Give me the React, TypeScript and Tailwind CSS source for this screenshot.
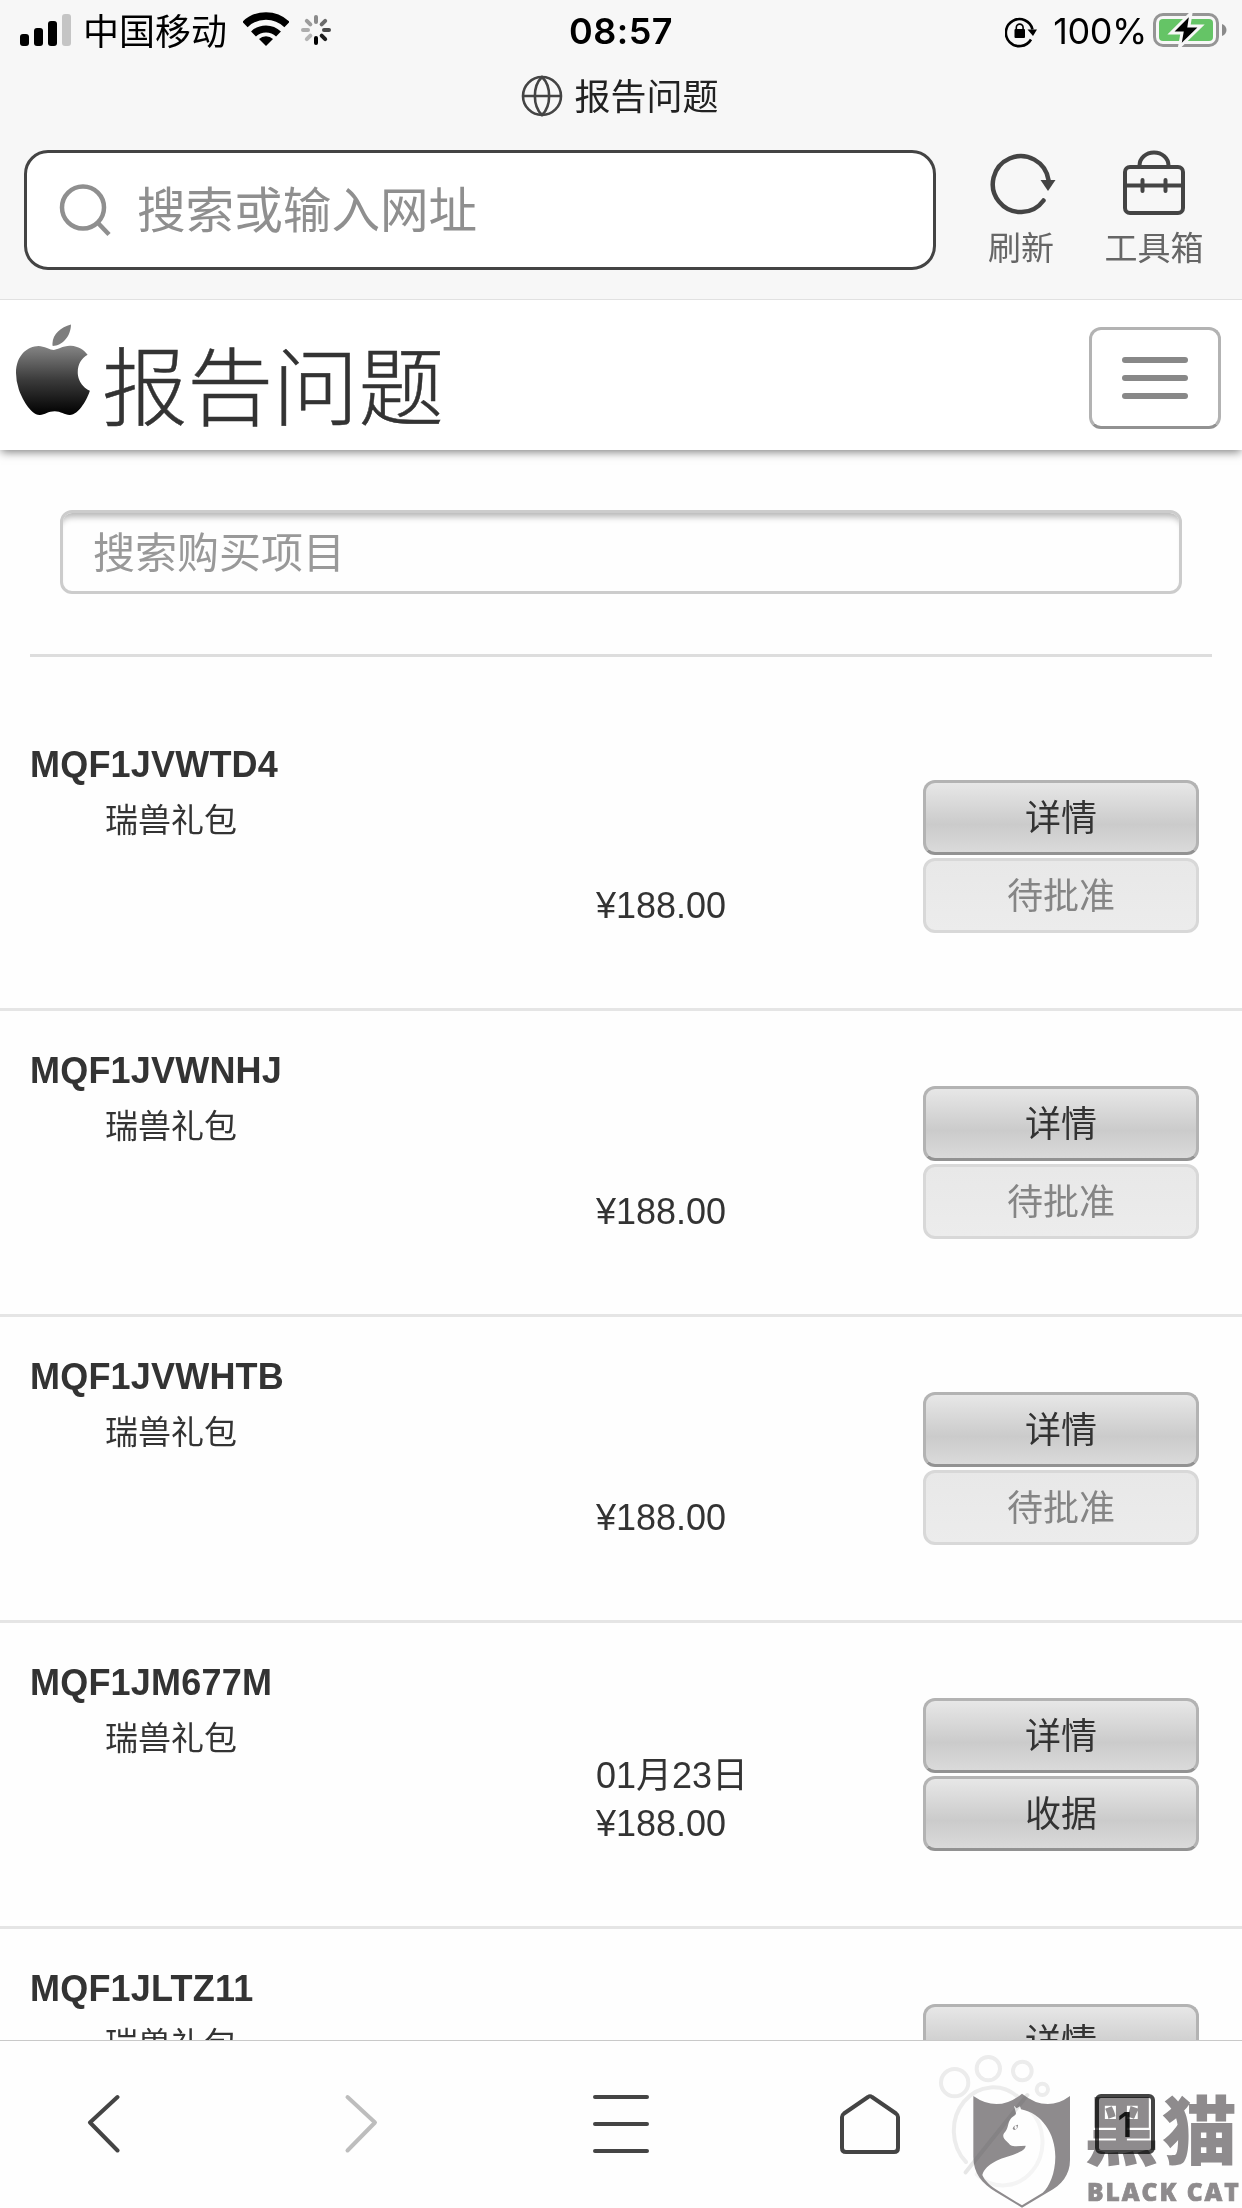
import clsx from "clsx";

type Order = {
  id: string;
  name: string;
  date?: string;
  price: string;
  pending: boolean;
};

const orders: Order[] = [
  { id: "MQF1JVWTD4", name: "瑞兽礼包", price: "¥188.00", pending: true },
  { id: "MQF1JVWNHJ", name: "瑞兽礼包", price: "¥188.00", pending: true },
  { id: "MQF1JVWHTB", name: "瑞兽礼包", price: "¥188.00", pending: true },
  {
    id: "MQF1JM677M",
    name: "瑞兽礼包",
    date: "01月23日",
    price: "¥188.00",
    pending: false,
  },
  { id: "MQF1JLTZ11", name: "瑞兽礼包", price: "¥188.00", pending: false },
];

// One entry per spoke, clockwise from the top
const spokes = [
  "#8a8a8a",
  "#6b6b6b",
  "#4a4a4a",
  "#1c1c1c",
  "#000000",
  "#b5b5b5",
  "#adadad",
  "#9c9c9c",
];

const stroke = {
  fill: "none",
  stroke: "#444",
  strokeWidth: 4,
  strokeLinecap: "round",
  strokeLinejoin: "round",
} as const;

const StatusBar = () => {
  return (
    <div className="grid h-[60px] grid-cols-3 items-start font-['Inter','Noto_Sans_CJK_SC',sans-serif] text-[36px] leading-[60px] text-black">
      <div className="flex items-start">
        <svg width="52" height="60" className="ml-5">
          <rect x="0" y="34" width="9" height="12" rx="3" />
          <rect x="14" y="28" width="9" height="18" rx="3" />
          <rect x="28" y="21" width="9" height="25" rx="3" />
          <rect x="42" y="14" width="9" height="32" rx="3" fill="#c5c5c5" />
        </svg>
        <span className="ml-[11px] font-['Noto_Sans_CJK_SC',sans-serif] leading-[58px]">
          中国移动
        </span>
        <svg width="46" height="60" className="ml-4" fill="none">
          <path
            d="M2 24.500a30 30 0 0 1 42 0"
            stroke="black"
            strokeWidth="7.500"
          />
          <path d="M10.500 34a18 18 0 0 1 25 0" stroke="black" strokeWidth="7" />
          <path d="M23 46l-7-7a10 10 0 0 1 14 0z" fill="black" />
        </svg>
        <svg width="30" height="60" viewBox="-15 -30 30 60" className="ml-3">
          {spokes.map((color, i) => (
            <line
              key={i}
              x1="0"
              y1="-13"
              x2="0"
              y2="-8"
              stroke={color}
              strokeWidth="4"
              strokeLinecap="round"
              transform={`rotate(${i * 45})`}
            />
          ))}
        </svg>
      </div>
      <div className="pt-px text-center font-semibold tracking-[0.500px]">
        08:57
      </div>
      <div className="flex items-start justify-end pr-[15px]">
        <svg width="33" height="60" fill="none" className="mr-[15px]">
          <path
            d="M26 39.500a13.500 13.500 0 1 1 1.500-10"
            stroke="black"
            strokeWidth="2.600"
          />
          <path d="M22.500 29.500h9.500l-4 6.500z" fill="black" />
          <rect x="9.500" y="29" width="10.500" height="9" rx="1" fill="black" />
          <path
            d="M11.300 30v-2.500a3.400 3.400 0 0 1 6.800 0v2.500"
            stroke="black"
            strokeWidth="1.600"
          />
        </svg>
        <span className="pt-px tracking-[-0.400px]">100%</span>
        <svg width="74" height="60" viewBox="0 0 74 60" className="ml-[6px]">
          <rect
            x="1.500"
            y="14.500"
            width="63"
            height="31"
            rx="8.500"
            fill="none"
            stroke="#959595"
            strokeWidth="3"
          />
          <rect x="6" y="19" width="54" height="22" rx="4" fill="#65c466" />
          <path d="M69 24c3 1 4.500 3.500 4.500 6s-1.500 5-4.500 6z" fill="#8a8a8a" />
          <path
            d="M38 13L18 33h11l-2.500 14L48 26H36z"
            fill="black"
            stroke="#f7f7f7"
            strokeWidth="3"
          />
        </svg>
      </div>
    </div>
  );
};

const BrowserHeader = () => {
  return (
    <header className="h-[300px] shrink-0 border-b border-[#e1e1e1] bg-[#f7f7f7]">
      <StatusBar />
      <div className="flex h-[72px] items-center justify-center gap-[11px] pr-0.5 text-[36px] text-[#222]">
        <svg
          width="42"
          height="42"
          viewBox="-21 -21 42 42"
          fill="none"
          stroke="#444"
          strokeWidth="2.600"
        >
          <circle r="19" />
          <path d="M-19 0h38M0-19c-9.500 9-9.500 29 0 38c9.500-9 9.500-29 0-38z" />
        </svg>
        <span className="pt-[3px]">报告问题</span>
      </div>
      <div className="flex pl-6 pt-[18px]">
        <div className="flex h-[120px] w-[912px] items-center rounded-[24px] border-[3px] border-[#444] bg-white pl-[31px]">
          <svg
            width="54"
            height="54"
            fill="none"
            stroke="#8f8f8f"
            strokeWidth="4.500"
          >
            <circle cx="25" cy="24.500" r="21" />
            <path d="M40 40l11 11.500" />
          </svg>
          <span className="ml-[25px] pt-0.5 text-[48.600px] text-[#8f8f8f]">
            搜索或输入网址
          </span>
        </div>
        <div className="ml-[50px] flex w-[70px] flex-col items-center text-[33px] text-[#666]">
          <svg
            width="70"
            height="68"
            viewBox="985 150 70 68"
            fill="none"
            stroke="#444"
            strokeWidth="4.500"
            strokeLinecap="round"
            className="overflow-visible"
          >
            <path d="M1042.500 200.500A28 28 0 1 1 1047.500 180" />
            <path d="M1039.500 180h15l-7.500 11z" fill="#444" stroke="none" />
          </svg>
          <span className="leading-[62px]">刷新</span>
        </div>
        <div className="ml-[47px] flex w-[102px] flex-col items-center text-[33px] text-[#666]">
          <svg
            width="70"
            height="68"
            viewBox="1120 149.500 70 68"
            fill="none"
            stroke="#444"
            strokeWidth="4"
            strokeLinecap="round"
          >
            <rect x="1126" y="166.500" width="58" height="46" rx="5" />
            <path d="M1140.500 165a14.500 13 0 0 1 29 0M1126 185h58M1143.500 179.500v11M1166.500 179.500v11" />
          </svg>
          <span className="leading-[62px]">工具箱</span>
        </div>
      </div>
    </header>
  );
};

const AppleLogo = () => {
  return (
    <svg
      width="74"
      height="91"
      viewBox="4 32 377 448"
      preserveAspectRatio="none"
    >
      <defs>
        <linearGradient id="apple" x1="0" y1="0" x2="0" y2="1">
          <stop offset="0" stopColor="#858585" />
          <stop offset="0.5" stopColor="#3a3a3a" />
          <stop offset="1" stopColor="#000" />
        </linearGradient>
      </defs>
      <path
        fill="url(#apple)"
        d="M318.700 268.700c-.2-36.700 16.400-64.400 50-84.800-18.800-26.900-47.200-41.700-84.700-44.600-35.500-2.800-74.300 20.700-88.500 20.700-15 0-49.400-19.700-76.400-19.700C63.300 141.200 4 184.800 4 273.500q0 39.300 14.400 81.200c12.800 36.700 59 126.700 107.200 125.200 25.200-.6 43-17.900 75.800-17.900 31.800 0 48.300 17.900 76.400 17.900 48.600-.7 90.400-82.500 102.600-119.300-65.200-30.700-61.700-90-61.700-91.900z"
      />
      <path
        fill="#7d7d7d"
        d="M284 34C232 46 192 82 190 126Q189 134 191 140C240 138 284 92 284 34z"
      />
    </svg>
  );
};

const OrderButton = ({
  label,
  disabled,
}: {
  label: string;
  disabled?: boolean;
}) => {
  return (
    <button
      disabled={disabled}
      className={clsx(
        "flex h-[75px] w-full items-center justify-center rounded-[12px] border-[3px] pt-[3px] text-[36px] leading-none",
        disabled
          ? "border-[#d8d8d8] bg-linear-to-b from-[#e8e8e8] to-[#ececec] text-[#858585]"
          : "border-[#b3b3b3] border-b-[#929292] bg-linear-to-b from-[#e7e7e7] via-[#cbcbcb] via-60% to-[#dadada] text-[#333]"
      )}
    >
      {label}
    </button>
  );
};

const OrderRow = ({ order }: { order: Order }) => {
  return (
    <li className="flex h-[306px] shrink-0 border-b-[3px] border-[#e5e5e5] text-[#333]">
      <div className="w-[596px] pl-[30px] pt-[36px]">
        <div className="text-[36px] font-bold leading-[48px] tracking-[0.200px]">
          {order.id}
        </div>
        <div className="pl-[75px] pt-[8px] text-[33px] leading-[48px]">
          {order.name}
        </div>
      </div>
      <div className="flex h-[225px] w-[327px] flex-col justify-end text-[36px] leading-[48px]">
        {order.date && <div>{order.date}</div>}
        <div>{order.price}</div>
      </div>
      <div className="flex w-[276px] flex-col gap-[3px] pt-[75px]">
        <OrderButton label="详情" />
        <OrderButton
          label={order.pending ? "待批准" : "收据"}
          disabled={order.pending}
        />
      </div>
    </li>
  );
};

const BottomBar = () => {
  return (
    <nav className="flex h-[168px] shrink-0 items-start border-t border-[#c9c9c9] bg-[#fefefe] pt-[53px]">
      <svg width="34" height="60" className="ml-[86px]" {...stroke}>
        <path d="M31.500 3L4 28.500l27.500 28" />
      </svg>
      <svg
        width="34"
        height="60"
        className="ml-[224px]"
        {...stroke}
        stroke="#bdbdbd"
      >
        <path d="M3.500 3L31 28.500l-27.500 28" />
      </svg>
      <svg width="58" height="60" className="ml-[214px]" {...stroke}>
        <path d="M3 3h52M3 30h52M3 57h52" />
      </svg>
      <svg width="60" height="60" className="ml-[190px]" {...stroke}>
        <path d="M2 23q0-2 2-3.500L28 3q2-1.500 4 0l24 16.500q2 1.500 2 3.500v31q0 4-4 4H6q-4 0-4-4z" />
      </svg>
      <div className="ml-[195px] flex h-[60px] w-[60px] items-center justify-center rounded-[6px] border-4 border-[#444] font-['Inter',sans-serif] text-[34px] font-semibold text-[#222]">
        1
      </div>
    </nav>
  );
};

const Watermark = () => {
  return (
    <div className="absolute bottom-0 right-0 flex h-[168px] w-[312px] mix-blend-multiply">
      <svg
        width="150"
        height="168"
        viewBox="450 180 450 504"
        fill="none"
        className="shrink-0"
      >
        <g stroke="#ededed" strokeWidth="12">
          <circle cx="524" cy="308" r="41" />
          <circle cx="625" cy="266" r="35" />
          <circle cx="727" cy="273" r="28" />
          <circle cx="787" cy="328" r="17" />
        </g>
        <path
          fill="#8f8c8e"
          d="M580 348Q655 400 726 341Q800 400 870 348V540C870 585 845 615 805 636L726 683L648 636C606 610 580 580 580 530Z"
        />
        <path
          fill="#fff"
          d="M702 377L710 385L720 379L723 388C785 400 826 460 826 530C826 580 808 620 788 638L726 676L652 631C630 617 614 602 607 585C618 548 665 535 700 524C722 516 737 507 737 497L704 499C690 498 688 491 682 486C670 477 667 468 672 460C686 447 682 431 691 418C698 407 708 408 708 400Z"
        />
        <path d="M698 446q2-11 16-12q1 14-12 16z" fill="#8f8c8e" />
        <ellipse cx="707" cy="442" rx="3.500" ry="6" fill="#fff" />
        <g strokeWidth="12" strokeLinecap="round">
          <path
            d="M558 546A118 130 0 0 1 716 353"
            stroke="#9a9a9a"
            strokeOpacity="0.180"
          />
          <path
            d="M748 388A118 130 0 0 1 590 583"
            stroke="#9a9a9a"
            strokeOpacity="0.100"
          />
          <path d="M557 577L742 345" stroke="#555" strokeOpacity="0.140" />
        </g>
      </svg>
      <div className="flex flex-col pl-[4px] pt-[54px] text-[#8f8c8e]">
        <span className="whitespace-nowrap text-[75px] font-black leading-[78px] tracking-[3px]">
          黑猫
        </span>
        <span className="mt-[6px] whitespace-nowrap pl-[3px] font-['Open_Sans',sans-serif] text-[24.500px] font-extrabold leading-[28px] tracking-[2px] [-webkit-text-stroke:0.700px_#8f8c8e]">
          BLACK CAT
        </span>
      </div>
    </div>
  );
};

const App = () => {
  return (
    <div className="relative flex h-[2208px] w-[1242px] flex-col overflow-hidden bg-[#fefefe] font-['Liberation_Sans','Noto_Sans_CJK_SC',sans-serif]">
      <BrowserHeader />
      <div className="z-10 flex h-[150px] shrink-0 items-start justify-between bg-white pl-4 pr-[21px] shadow-[0_3px_9px_-1px_rgba(0,0,0,0.500)] [clip-path:inset(0_0_-30px_0)]">
        <div className="flex items-start pt-6">
          <AppleLogo />
          <h1 className="ml-[12px] font-['Noto_Sans_CJK_SC',sans-serif] text-[85.500px] font-light leading-[117px] text-[#333] [-webkit-text-stroke:0.500px_#333]">
            报告问题
          </h1>
        </div>
        <button className="mt-[27px] flex h-[102px] w-[132px] flex-col items-center justify-center gap-3 rounded-[12px] border-[3px] border-[#b3b3b3] border-b-[#929292]">
          <span className="h-1.5 w-[66px] rounded-full bg-[#888]" />
          <span className="h-1.5 w-[66px] rounded-full bg-[#888]" />
          <span className="h-1.5 w-[66px] rounded-full bg-[#888]" />
        </button>
      </div>
      <main className="flex min-h-0 flex-1 flex-col overflow-hidden">
        <div className="mx-[60px] mt-[60px] flex h-[84px] shrink-0 items-center rounded-[12px] border-[3px] border-[#ccc] pl-[30px] pt-0.5 text-[42px] text-[#999] shadow-[inset_0_9px_6px_-5px_rgba(0,0,0,0.280)]">
          搜索购买项目
        </div>
        <hr className="mx-[30px] mt-[60px] shrink-0 border-t-[3px] border-[#ddd]" />
        <ul className="mt-[48px] flex flex-col">
          {orders.map((order) => (
            <OrderRow key={order.id} order={order} />
          ))}
        </ul>
      </main>
      <BottomBar />
      <Watermark />
    </div>
  );
};

export default App;
